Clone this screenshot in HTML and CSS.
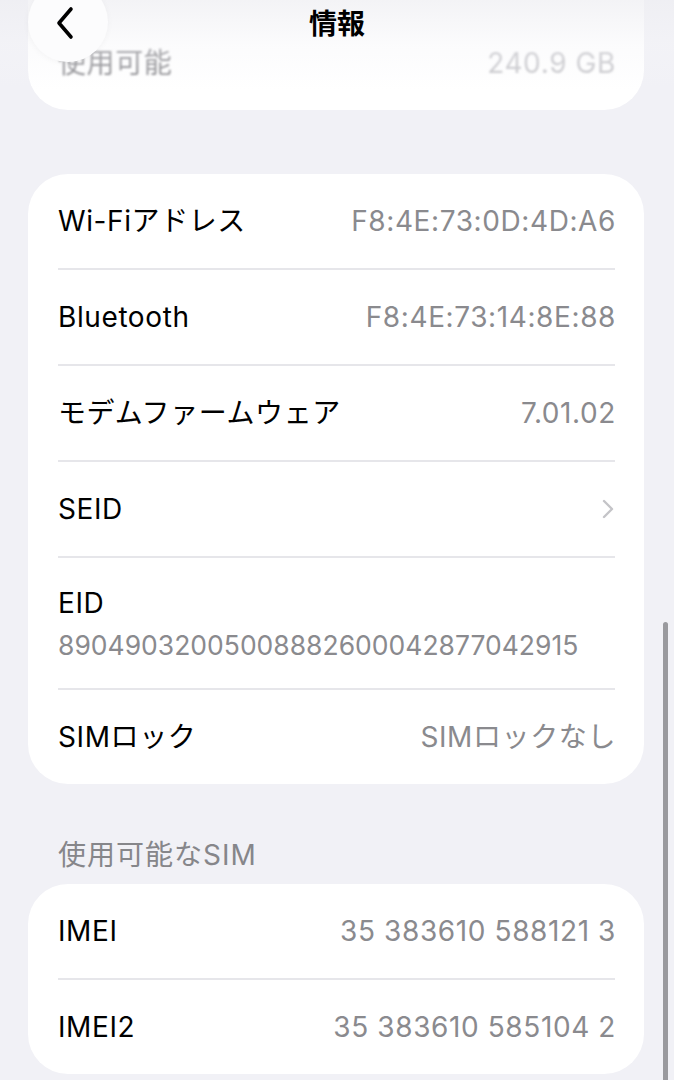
FILE: index.html
```html
<!DOCTYPE html>
<html lang="ja">
<head>
<meta charset="utf-8">
<link rel="stylesheet" href="styles.css">
</head>
<body>
<div class="page">
  <div class="card top-card">
    <div class="row">
      <span class="label dim">使用可能</span>
      <span class="value dim2">240.9 GB</span>
    </div>
  </div>

  <div class="card main-card">
    <div class="row"><span class="label">Wi-Fiアドレス</span><span class="value">F8:4E:73:0D:4D:A6</span></div>
    <div class="sep"></div>
    <div class="row"><span class="label">Bluetooth</span><span class="value">F8:4E:73:14:8E:88</span></div>
    <div class="sep"></div>
    <div class="row"><span class="label">モデムファームウェア</span><span class="value">7.01.02</span></div>
    <div class="sep"></div>
    <div class="row"><span class="label">SEID</span>
      <svg class="chev" width="12" height="20" viewBox="0 0 12 20"><path d="M2 2 L10 10 L2 18" fill="none" stroke="#c4c4c8" stroke-width="2.4" stroke-linecap="round" stroke-linejoin="round"/></svg>
    </div>
    <div class="sep"></div>
    <div class="row tall">
      <span class="label">EID</span>
      <span class="value sub">89049032005008882600042877042915</span>
    </div>
    <div class="sep"></div>
    <div class="row"><span class="label">SIMロック</span><span class="value">SIMロックなし</span></div>
  </div>

  <div class="section-title">使用可能なSIM</div>
  <div class="card sim-card">
    <div class="row"><span class="label">IMEI</span><span class="value">35 383610 588121 3</span></div>
    <div class="sep"></div>
    <div class="row"><span class="label">IMEI2</span><span class="value">35 383610 585104 2</span></div>
  </div>
</div>

<div class="navfade"></div>
<div class="nav">
  <div class="back">
    <svg width="24" height="34" viewBox="0 0 24 34"><path d="M18 3 L6 17 L18 31" fill="none" stroke="#000" stroke-width="3.6" stroke-linecap="round" stroke-linejoin="round"/></svg>
  </div>
  <div class="title">情報</div>
</div>
<div class="scrollbar"></div>
</body>
</html>
```
FILE: styles.css
```css
* { box-sizing: border-box; }
html, body {
  margin: 0;
  padding: 0;
  background: #f1f1f6;
  overflow: hidden;
}
body {
  font-family: Inter, "Noto Sans CJK JP", sans-serif;
  width: 674px;
  height: 1080px;
  position: relative;
}
.page {
  padding: 0 30px 0 28px;
}
.card {
  background: #fff;
  border-radius: 40px;
}
.top-card {
  margin-top: -70px;
  height: 180px;
  display: flex;
  flex-direction: column;
  justify-content: flex-end;
}
.main-card {
  margin-top: 64px;
}
.row {
  height: 94px;
  display: flex;
  align-items: center;
  justify-content: space-between;
  padding: 0 28px 0 30px;
}
.row.tall {
  height: 130px;
  flex-direction: column;
  align-items: flex-start;
  justify-content: center;
  gap: 6px;
  padding-top: 2px;
}
.label {
  font-size: 28px;
  color: #000;
  letter-spacing: 0.6px;
  line-height: 36px;
}
.value {
  font-size: 28px;
  color: #8a8a8e;
  letter-spacing: 0.6px;
  line-height: 36px;
}
.value.sub {
  font-size: 26.5px;
  letter-spacing: 0;
}
.dim { color: #8a8a8e; filter: blur(0.8px); }
.dim2 { color: #c6c6ca; filter: blur(0.8px); }
.sep {
  height: 2px;
  background: #e6e6ea;
  margin: 0 29px 0 30px;
}
.chev { display: block; margin-right: 2px; }
.section-title {
  font-size: 28px;
  color: #86868a;
  padding: 54px 30px 12px 30px;
  line-height: 34px;
  letter-spacing: 1px;
}
.sim-card {
  margin-bottom: 20px;
}
.navfade {
  position: absolute;
  left: 0; top: 0;
  width: 100%;
  height: 90px;
  background: linear-gradient(to bottom, rgba(238,238,242,0.7) 0%, rgba(245,245,248,0.35) 50%, rgba(255,255,255,0) 100%);
  pointer-events: none;
}
.nav {
  position: absolute;
  left: 0; top: 0;
  width: 100%;
  height: 50px;
}
.back {
  position: absolute;
  left: 28px;
  top: -18px;
  width: 80px;
  height: 80px;
  border-radius: 50%;
  background: #fcfcfd;
  box-shadow: 0 1px 6px rgba(0,0,0,0.04);
  display: flex;
  align-items: center;
  justify-content: center;
  padding-top: 18px;
  padding-right: 6px;
}
.back svg { margin-top: -16px; }
.title {
  position: absolute;
  left: 0; right: 0;
  top: 3px;
  text-align: center;
  font-size: 28px;
  font-weight: 700;
  color: #000;
  font-family: "Noto Sans CJK JP", sans-serif;
  line-height: 38px;
}
.scrollbar {
  position: absolute;
  left: 663px;
  top: 622px;
  width: 5px;
  height: 470px;
  border-radius: 3px;
  background: #9a9a9e;
}
```
